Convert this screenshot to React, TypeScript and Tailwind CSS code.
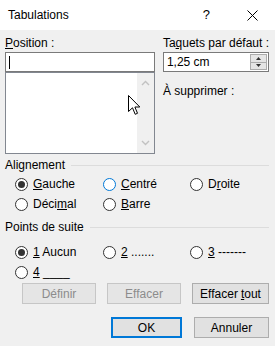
import React from 'react'

function Radio({ checked, focus, children }: { checked?: boolean; focus?: boolean; children: React.ReactNode }) {
  return (
    <div className="flex items-center gap-[5px] h-[20px]">
      <span
        className={`w-[13px] h-[13px] rounded-full bg-white border flex items-center justify-center ${
          focus ? 'border-[#0078d7]' : 'border-[#333333]'
        }`}
      >
        {checked && <span className="w-[7px] h-[7px] rounded-full bg-[#333333]" />}
      </span>
      <span>{children}</span>
    </div>
  )
}

function GroupTitle({ label }: { label: string }) {
  return (
    <div className="flex items-center h-[16px]">
      <span>{label}</span>
      <span className="flex-1 h-px bg-[#dcdcdc] ml-[6px] mr-[1px]" />
    </div>
  )
}

function Button({
  children,
  disabled,
  primary,
  className = '',
}: {
  children: React.ReactNode
  disabled?: boolean
  primary?: boolean
  className?: string
}) {
  const look = disabled
    ? 'bg-[#e5e5e5] border-[#c6c6c6] text-[#8c8c8c]'
    : primary
      ? 'bg-[#e1e1e1] border-2 border-[#0078d7]'
      : 'bg-[#e1e1e1] border-[#adadad]'
  return (
    <div className={`h-[21px] border flex items-center justify-center ${look} ${className}`}>{children}</div>
  )
}

export default function App() {
  return (
    <div
      className="relative w-[275px] h-[346px] bg-[#f0f0f0] text-black text-[12px] leading-[16px] overflow-hidden"
      style={{ fontFamily: '"Liberation Sans", Arial, sans-serif' }}
    >
      {/* Title bar */}
      <div className="h-[30px] bg-white flex items-center pl-[8px] pr-[17px]">
        <span className="flex-1">Tabulations</span>
        <span className="text-[13px] mr-[37px]">?</span>
        <svg width="11" height="11" viewBox="0 0 11 11">
          <path d="M0.5 0.5 L10.5 10.5 M10.5 0.5 L0.5 10.5" stroke="#000" strokeWidth="1" />
        </svg>
      </div>

      <div className="px-[5px]">
        {/* Top fields */}
        <div className="flex mt-[5px]">
          <div className="w-[152px]">
            <div className="h-[16px]">
              <span className="underline">P</span>osition :
            </div>
            <div className="mt-[1px] h-[20px] bg-white border border-[#7a7a7a] flex items-center pl-[3px]">
              <span className="w-px h-[13px] bg-black" />
            </div>
            <div className="h-[82px] bg-white border border-[#828790] flex justify-end">
              <div className="w-[17px] bg-[#f0f0f0] flex flex-col items-center justify-between py-[7px]">
                <svg width="9" height="6" viewBox="0 0 9 6">
                  <path d="M1 5 L4.5 1.5 L8 5" fill="none" stroke="#c2c2c2" strokeWidth="1.4" />
                </svg>
                <svg width="9" height="6" viewBox="0 0 9 6">
                  <path d="M1 1 L4.5 4.5 L8 1" fill="none" stroke="#c2c2c2" strokeWidth="1.4" />
                </svg>
              </div>
            </div>
          </div>

          <div className="ml-[8px] flex-1 pr-[1px]">
            <div className="h-[16px] whitespace-nowrap">
              Ta<span className="underline">q</span>uets par défaut :
            </div>
            <div className="mt-[1px] h-[20px] bg-white border border-[#7a7a7a] flex items-center pl-[3px]">
              <span className="flex-1">1,25 cm</span>
              <div className="w-[17px] h-[16px] flex flex-col mr-px">
                <div className="flex-1 bg-[#e5e5e5] border border-[#acacac] flex items-center justify-center">
                  <svg width="5" height="3" viewBox="0 0 5 3">
                    <path d="M0 3 L2.5 0 L5 3 Z" fill="#333" />
                  </svg>
                </div>
                <div className="flex-1 bg-[#e5e5e5] border border-t-0 border-[#acacac] flex items-center justify-center">
                  <svg width="5" height="3" viewBox="0 0 5 3">
                    <path d="M0 0 L2.5 3 L5 0 Z" fill="#333" />
                  </svg>
                </div>
              </div>
            </div>
            <div className="mt-[11px]">À supprimer :</div>
          </div>
        </div>

        {/* Alignement */}
        <div className="mt-[3px]">
          <GroupTitle label="Alignement" />
        </div>
        <div className="grid grid-cols-[88px_87px_1fr] pl-[10px] mt-px">
          <Radio checked>
            <span className="underline">G</span>auche
          </Radio>
          <Radio focus>
            <span className="underline">C</span>entré
          </Radio>
          <Radio>
            D<span className="underline">r</span>oite
          </Radio>
          <Radio>
            Déci<span className="underline">m</span>al
          </Radio>
          <Radio>
            <span className="underline">B</span>arre
          </Radio>
        </div>

        {/* Points de suite */}
        <div className="mt-[5px]">
          <GroupTitle label="Points de suite" />
        </div>
        <div className="grid grid-cols-[88px_87px_1fr] pl-[10px] mt-[7px]">
          <Radio checked>
            <span className="underline">1</span> Aucun
          </Radio>
          <Radio>
            <span className="underline">2</span> .......
          </Radio>
          <Radio>
            <span className="underline">3</span> -------
          </Radio>
          <Radio>
            <span className="underline">4</span> ____
          </Radio>
        </div>

        {/* Buttons */}
        <div className="flex justify-end gap-[11px] mt-[1px] pr-px">
          <Button disabled className="w-[74px]">
            Définir
          </Button>
          <Button disabled className="w-[74px]">
            Effacer
          </Button>
          <Button className="w-[77px]">
            Effacer <span className="underline ml-[3px]">t</span>out
          </Button>
        </div>
        <div className="flex justify-end gap-[12px] mt-[13px] pr-px">
          <Button primary className="w-[71px]">
            OK
          </Button>
          <Button className="w-[75px]">Annuler</Button>
        </div>
      </div>

      {/* Mouse pointer */}
      <svg className="absolute left-[128px] top-[95px]" width="13" height="21" viewBox="0 0 13 21">
        <path
          d="M0.5 0.5 L0.5 16.5 L4.5 12.8 L7.2 19.3 L9.5 18.3 L6.9 12 L11.8 12 Z"
          fill="#fff"
          stroke="#000"
          strokeWidth="1"
          strokeLinejoin="round"
        />
      </svg>
    </div>
  )
}
